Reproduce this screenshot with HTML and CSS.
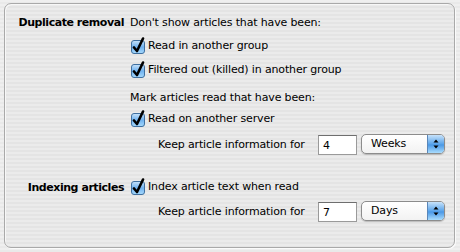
FILE: index.html
```html
<!DOCTYPE html>
<html lang="en">
  <head>
    <meta charset="UTF-8" />
    <title>Preferences</title>
    <link rel="stylesheet" href="styles.css">
  </head>
  <body>
    <div class="box">
      <div class="section dup">
        <div class="label">Duplicate removal</div>
        <div class="content">
          <div class="line">Don't show articles that have been:</div>
          <div class="check-row r1">
            <svg class="cb" width="16" height="17" viewBox="0 0 16 17"><defs><linearGradient id="g1" x1="0" y1="0" x2="0" y2="1"><stop offset="0" stop-color="#c9e4fb"/><stop offset="0.5" stop-color="#6fb1ef"/><stop offset="1" stop-color="#a7dafd"/></linearGradient></defs><rect x="1.5" y="3.5" width="13" height="13" rx="2.5" fill="url(#g1)" stroke="#3f6f9f"/><path d="M4 10.5 L7 14 L13 1.5" fill="none" stroke="#000" stroke-width="2.6" stroke-linecap="round" stroke-linejoin="round"/></svg>
            <span>Read in another group</span>
          </div>
          <div class="check-row r2">
            <svg class="cb" width="16" height="17" viewBox="0 0 16 17"><rect x="1.5" y="3.5" width="13" height="13" rx="2.5" fill="url(#g1)" stroke="#3f6f9f"/><path d="M4 10.5 L7 14 L13 1.5" fill="none" stroke="#000" stroke-width="2.6" stroke-linecap="round" stroke-linejoin="round"/></svg>
            <span>Filtered out (killed) in another group</span>
          </div>
          <div class="line mark">Mark articles read that have been:</div>
          <div class="check-row r3">
            <svg class="cb" width="16" height="17" viewBox="0 0 16 17"><rect x="1.5" y="3.5" width="13" height="13" rx="2.5" fill="url(#g1)" stroke="#3f6f9f"/><path d="M4 10.5 L7 14 L13 1.5" fill="none" stroke="#000" stroke-width="2.6" stroke-linecap="round" stroke-linejoin="round"/></svg>
            <span>Read on another server</span>
          </div>
          <div class="keep k1">
            <span class="keep-label">Keep article information for</span>
            <div class="field">4</div>
            <div class="popup">
              <span class="popup-text">Weeks</span>
              <span class="arrows"><svg width="8" height="12" viewBox="0 0 8 12"><path d="M4 1.5 L6.5 4.5 L1.5 4.5 Z M4 10.5 L6.5 7.5 L1.5 7.5 Z" fill="#000"/></svg></span>
            </div>
          </div>
        </div>
      </div>
      <div class="section idx">
        <div class="label">Indexing articles</div>
        <div class="content">
          <div class="check-row r4">
            <svg class="cb" width="16" height="17" viewBox="0 0 16 17"><rect x="1.5" y="3.5" width="13" height="13" rx="2.5" fill="url(#g1)" stroke="#3f6f9f"/><path d="M4 10.5 L7 14 L13 1.5" fill="none" stroke="#000" stroke-width="2.6" stroke-linecap="round" stroke-linejoin="round"/></svg>
            <span>Index article text when read</span>
          </div>
          <div class="keep k2">
            <span class="keep-label">Keep article information for</span>
            <div class="field">7</div>
            <div class="popup">
              <span class="popup-text">Days</span>
              <span class="arrows"><svg width="8" height="12" viewBox="0 0 8 12"><path d="M4 1.5 L6.5 4.5 L1.5 4.5 Z M4 10.5 L6.5 7.5 L1.5 7.5 Z" fill="#000"/></svg></span>
            </div>
          </div>
        </div>
      </div>
    </div>
  </body>
</html>
```

FILE: styles.css
```css
* {
  margin: 0;
  padding: 0;
  box-sizing: border-box;
}
html,
body {
  width: 460px;
  height: 252px;
  overflow: hidden;
}
body {
  padding: 3px 5px 4px 4px;
  font-family: "DejaVu Sans", sans-serif;
  font-size: 11px;
  letter-spacing: -0.15px;
  color: #000;
  white-space: nowrap;
  background: repeating-linear-gradient(to bottom, #efefef 0, #efefef 2px, #e9e9e9 2px, #e9e9e9 4px);
}

/* Group box */
.box {
  height: 245px;
  border: 1px solid #a9a9a9;
  border-radius: 7px;
  box-shadow: inset 1px 1px 0 #f7f7f7, 1px 1px 0 #fbfbfb;
  background: repeating-linear-gradient(to bottom, #ebebeb 0, #ebebeb 2px, #e4e4e4 2px, #e4e4e4 4px);
  padding-top: 12px;
}

.section {
  display: grid;
  grid-template-columns: 119px 1fr;
  column-gap: 6px;
}
.label {
  font-weight: bold;
  letter-spacing: -0.45px;
  text-align: right;
  line-height: 14px;
}
.idx {
  margin-top: 23px;
}
.idx .label {
  padding-top: 3px;
}

.line {
  line-height: 14px;
}
.mark {
  margin-top: 13px;
}

.check-row {
  display: flex;
  align-items: flex-end;
  gap: 2px;
  height: 17px;
  margin-top: 7px;
}
.check-row span {
  line-height: 14px;
  padding-bottom: 1px;
}
.r4 {
  margin-top: 0;
}
.r3 {
  margin-top: 5px;
}

.keep {
  display: flex;
  align-items: center;
  height: 21px;
  margin-top: 7px;
  padding-left: 28px;
}
.k2 {
  margin-top: 6px;
}
.keep-label {
  width: 160px;
}
.field {
  width: 39px;
  height: 20px;
  background: #fff;
  border: 1px solid #9a9a9a;
  border-top-color: #6e6e6e;
  padding: 3px 0 0 4px;
  line-height: 14px;
}
.popup {
  display: flex;
  margin-left: 4px;
  width: 84px;
  height: 20px;
  margin-top: -2px;
  border: 1px solid #8c8c8c;
  border-radius: 5px;
  background: linear-gradient(to bottom, #ffffff, #f2f2f2);
  overflow: hidden;
  box-shadow: 0 1px 1px rgba(0, 0, 0, 0.2);
}
.popup-text {
  flex: 1;
  padding: 1px 0 0 9px;
  line-height: 16px;
}
.arrows {
  width: 17px;
  display: flex;
  align-items: center;
  justify-content: center;
  border-left: 1px solid #5a86b8;
  background: linear-gradient(to bottom, #c7e2fa, #5aa4ea 50%, #4a98e6 55%, #a9dcfd);
}
```
